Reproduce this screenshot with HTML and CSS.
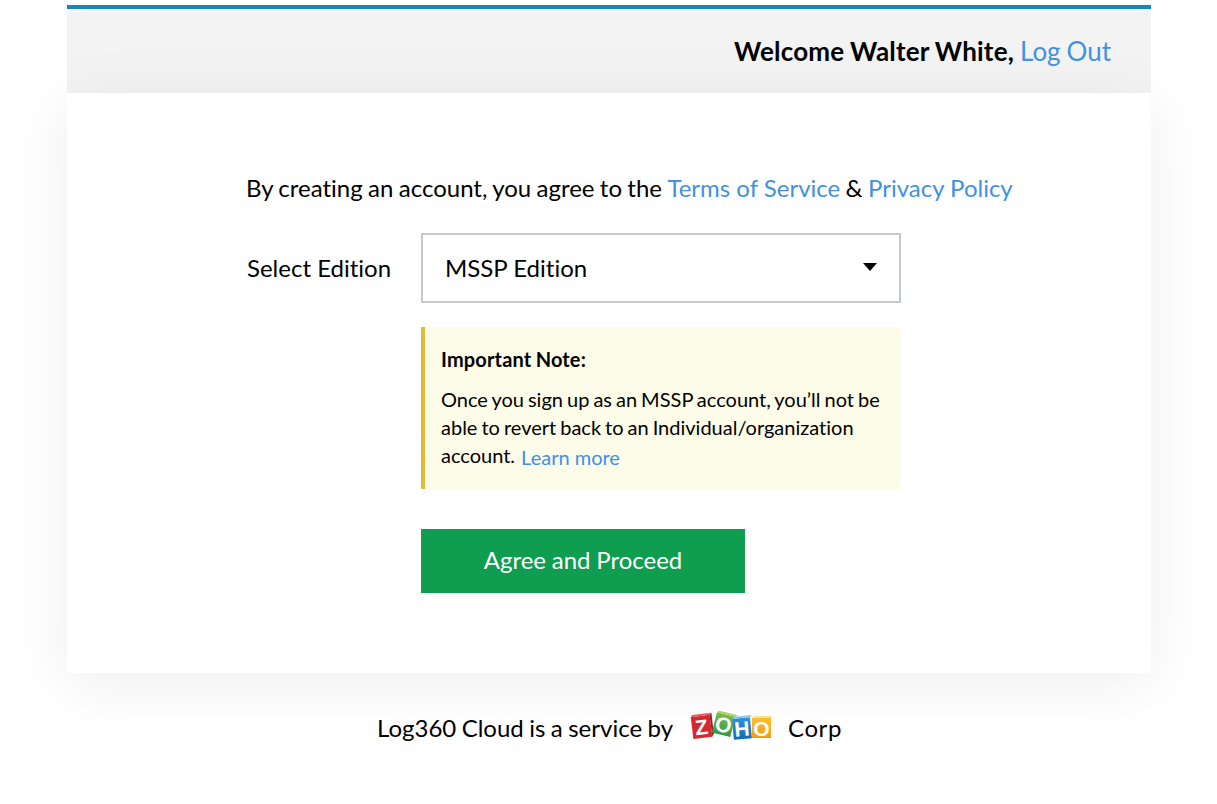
FILE: index.html
```html
<!DOCTYPE html>
<html lang="en">
<head>
    <meta charset="UTF-8">
    <meta name="viewport" content="width=device-width, initial-scale=1.0">
    <title>Log360 Cloud</title>
    <link rel="stylesheet" href="styles.css">
</head>
<body>
    <div class="card">
        <header class="card-header">
            <span class="welcome">Welcome Walter White,</span>
            <a href="#" class="link">Log Out</a>
        </header>
        <main class="card-body">
            <p class="terms">By creating an account, you agree to the <a href="#" class="link">Terms of Service</a> &amp; <a href="#" class="link">Privacy Policy</a></p>
            <div class="edition-row">
                <label class="edition-label">Select Edition</label>
                <div class="edition-col">
                    <div class="select-box">
                        <span>MSSP Edition</span>
                        <span class="caret"></span>
                    </div>
                    <div class="note">
                        <h2>Important Note:</h2>
                        <p>Once you sign up as an MSSP account, you’ll not be able to revert back to an Individual/organization account. <a href="#" class="link learn">Learn more</a></p>
                    </div>
                    <button type="button" class="proceed">Agree and Proceed</button>
                </div>
            </div>
        </main>
    </div>
    <footer class="footer">
        <span>Log360 Cloud is a service by</span>
        <svg class="zoho" width="82" height="32" viewBox="0 0 82 32" aria-label="ZOHO">
            <defs>
                <linearGradient id="tileGreen" x1="0" y1="0" x2="0" y2="1">
                    <stop offset="0" stop-color="#7dbb4b"/>
                    <stop offset="1" stop-color="#2f9a45"/>
                </linearGradient>
                <linearGradient id="tileBlue" x1="0" y1="0" x2="0" y2="1">
                    <stop offset="0" stop-color="#2f93d6"/>
                    <stop offset="1" stop-color="#0f6db3"/>
                </linearGradient>
                <linearGradient id="tileYellow" x1="0" y1="0" x2="0" y2="1">
                    <stop offset="0" stop-color="#fbc02d"/>
                    <stop offset="1" stop-color="#f09a1a"/>
                </linearGradient>
            </defs>
            <g transform="rotate(-7 11 16)">
                <rect x="2" y="5" width="19" height="22" fill="#d7282f"/>
                <path d="M2 5l2-2h19l-2 2z" fill="#e9585d"/>
                <path d="M21 5l2-2v21l-2 3z" fill="#9c1c22"/>
                <text x="11.5" y="23.5" class="tile-letter">Z</text>
            </g>
            <g transform="rotate(14 33 14)">
                <rect x="24" y="3" width="19" height="21" fill="url(#tileGreen)"/>
                <path d="M24 3l2-2h19l-2 2z" fill="#a6d36a"/>
                <text x="33.5" y="21" class="tile-letter">O</text>
            </g>
            <g transform="rotate(-5 52 18)">
                <rect x="43" y="7" width="18" height="21" fill="url(#tileBlue)"/>
                <path d="M43 7l2-2h18l-2 2z" fill="#8ac7ee"/>
                <text x="52" y="25" class="tile-letter">H</text>
            </g>
            <rect x="62" y="7" width="19" height="20" fill="url(#tileYellow)"/>
            <path d="M62 7l2-2h18l-1 2z" fill="#fde08a"/>
            <text x="71.5" y="24.5" class="tile-letter">O</text>
        </svg>
        <span class="corp">Corp</span>
    </footer>
</body>
</html>
```

FILE: styles.css
```css
* {
    margin: 0;
    padding: 0;
    box-sizing: border-box;
}
body {
    font-family: 'Lato', sans-serif;
    font-variant-ligatures: none;
    word-spacing: -0.7px;
    color: #000;
    background: #fff;
    min-height: 100vh;
    padding: 5px 66px 0 67px;
    overflow: hidden;
}
.link {
    color: #4191e0;
    text-decoration: none;
}
.card {
    width: 1084px;
    border-top: 4px solid #1589b6;
}
.card-header {
    height: 84px;
    padding: 0 40px 0 0;
    display: flex;
    align-items: center;
    justify-content: flex-end;
    gap: 6px;
    font-size: 26px;
    background: #f3f3f3;
}
.welcome {
    font-weight: 700;
    letter-spacing: 0.2px;
}
.card-body {
    height: 580px;
    padding: 79px 0 0 180px;
    background: #fff;
    box-shadow: 0 10px 60px rgba(0, 0, 0, 0.07);
}
.terms {
    font-size: 24px;
    line-height: 32px;
    word-spacing: -0.8px;
    margin-left: -1px;
}
.terms .link {
    word-spacing: 0;
}
.edition-row {
    display: flex;
    margin-top: 29px;
}
.edition-label {
    width: 174px;
    font-size: 24px;
    line-height: 70px;
    word-spacing: 0;
}
.edition-col {
    width: 480px;
}
.select-box {
    height: 70px;
    padding: 0 22px 2px;
    display: flex;
    align-items: center;
    justify-content: space-between;
    font-size: 24px;
    word-spacing: 0;
    border: 2px solid #c4c8cc;
}
.caret {
    width: 0;
    height: 0;
    border-left: 7px solid transparent;
    border-right: 7px solid transparent;
    border-top: 8px solid #000;
}
.note {
    height: 162px;
    margin-top: 24px;
    padding: 19px 16px 0 16px;
    background: #fdfce9;
    border-left: 4px solid #e4b934;
}
.note h2 {
    font-size: 20px;
    font-weight: 700;
    line-height: 26px;
    letter-spacing: 0.15px;
}
.note p {
    margin-top: 13px;
    font-size: 20px;
    line-height: 28px;
    word-spacing: -1.1px;
}
.learn {
    margin-left: 2px;
    vertical-align: -2px;
    word-spacing: 0;
}
.proceed {
    display: block;
    width: 324px;
    height: 64px;
    margin-top: 40px;
    padding-bottom: 3px;
    font-family: inherit;
    font-size: 24px;
    word-spacing: -0.4px;
    color: #fff;
    background: #0f9d50;
    border: none;
}
.footer {
    height: 32px;
    margin-top: 38px;
    padding-left: 1px;
    display: flex;
    align-items: center;
    justify-content: center;
    font-size: 24px;
}
.zoho {
    margin: 0 17px;
}
.corp {
    margin-left: -1px;
    letter-spacing: 0.6px;
}
.tile-letter {
    font-family: 'Liberation Sans', sans-serif;
    font-size: 21px;
    font-weight: 700;
    fill: #fff;
    text-anchor: middle;
}
```
